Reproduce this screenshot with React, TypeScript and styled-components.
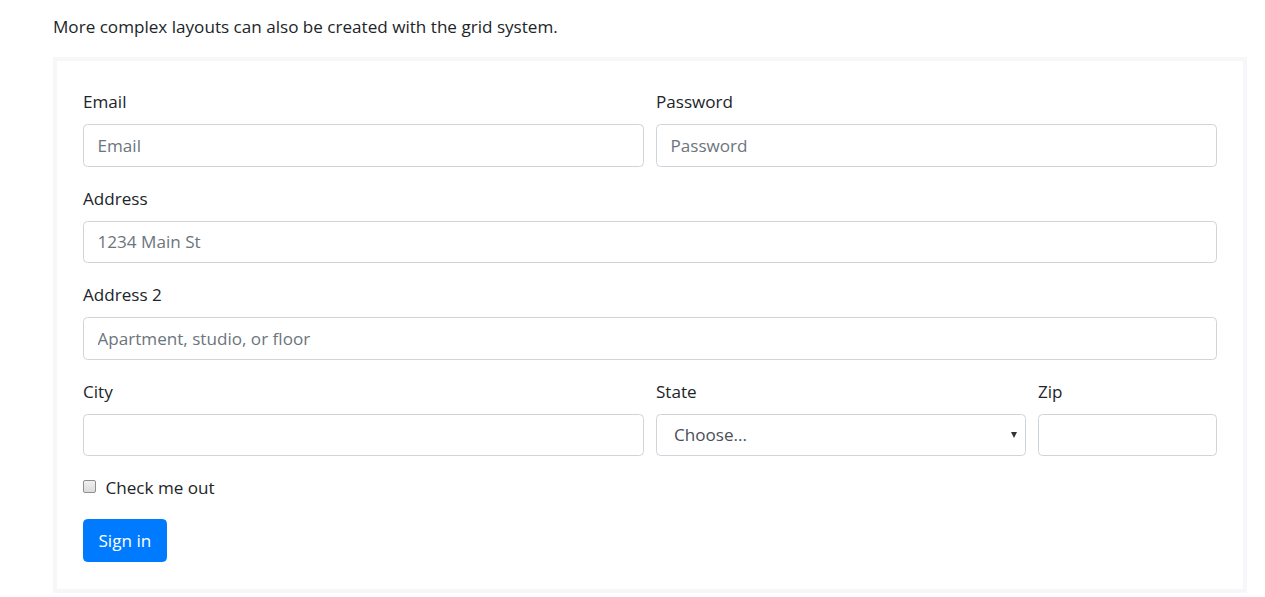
import React from "react";
import styled, { createGlobalStyle } from "styled-components";

const GlobalStyle = createGlobalStyle`
  html, body {
    margin: 0;
    padding: 0;
    background: #ffffff;
  }
  body {
    font-family: "Open Sans", "Noto Sans", sans-serif;
    font-size: 17.1px;
    line-height: 27px;
    color: #212529;
  }
  * { box-sizing: border-box; }
`;

const Page = styled.div`
  width: 1265px;
  padding: 13px 0 0 53px;
`;

const Lead = styled.p`
  margin: 0 0 17px;
  font-size: 17.1px;
  line-height: 27px;
`;

const Example = styled.div`
  width: 1194px;
  border: 4px solid #f7f7f9;
  padding: 27px 26px;
  background: #ffffff;
`;

const Grid = styled.div`
  display: grid;
  grid-template-columns: repeat(12, 1fr);
  column-gap: 12px;
`;

const Group = styled.div<{ $span: number }>`
  grid-column: span ${(p) => p.$span};
  margin-bottom: 18px;
  min-width: 0;
`;

const Label = styled.label`
  display: block;
  margin-bottom: 9px;
  line-height: 27px;
  font-size: 17.1px;
  color: #212529;
`;

const Input = styled.input`
  display: block;
  width: 100%;
  height: 42.5px;
  padding: 6.75px 13.5px;
  font-family: inherit;
  font-size: 17.1px;
  line-height: 27px;
  color: #495057;
  background: #ffffff;
  border: 1px solid #ced4da;
  border-radius: 4.5px;
  outline: none;
  &::placeholder {
    color: #6c757d;
    opacity: 1;
  }
`;

const SelectWrap = styled.div`
  position: relative;
  &::after {
    content: "";
    position: absolute;
    right: 9px;
    top: 18px;
    width: 0;
    height: 0;
    border-left: 3.5px solid transparent;
    border-right: 3.5px solid transparent;
    border-top: 6px solid #333333;
    pointer-events: none;
  }
`;

const Select = styled.select`
  display: block;
  width: 100%;
  height: 42.5px;
  padding: 0 24px 0 17px;
  font-family: inherit;
  font-size: 17.1px;
  color: #495057;
  background: #ffffff;
  border: 1px solid #ced4da;
  border-radius: 4.5px;
  appearance: none;
  -webkit-appearance: none;
  outline: none;
`;

const Check = styled.div`
  grid-column: span 12;
  position: relative;
  padding-left: 22.5px;
  margin-bottom: 18px;
  line-height: 27px;
  display: flex;
`;

const CheckBox = styled.input`
  appearance: none;
  -webkit-appearance: none;
  position: absolute;
  left: 0;
  top: 5.5px;
  width: 13px;
  height: 13px;
  margin: 0;
  border: 1px solid #8f8f8f;
  border-radius: 2px;
  background: linear-gradient(#f0f0f0, #dcdcdc);
`;

const CheckLabel = styled.label`
  font-size: 17.1px;
  line-height: 27px;
`;

const Button = styled.button`
  display: inline-block;
  height: 42.5px;
  padding: 6.75px 14.5px;
  font-family: inherit;
  font-size: 17.1px;
  line-height: 27px;
  color: #ffffff;
  background: #007bff;
  border: 1px solid #007bff;
  border-radius: 4.5px;
  cursor: pointer;
`;

export default function App() {
  return (
    <>
      <GlobalStyle />
      <Page>
        <Lead>More complex layouts can also be created with the grid system.</Lead>
        <Example>
          <form onSubmit={(e) => e.preventDefault()}>
            <Grid>
              <Group $span={6}>
                <Label htmlFor="inputEmail4">Email</Label>
                <Input type="email" id="inputEmail4" placeholder="Email" />
              </Group>
              <Group $span={6}>
                <Label htmlFor="inputPassword4">Password</Label>
                <Input type="password" id="inputPassword4" placeholder="Password" />
              </Group>
              <Group $span={12}>
                <Label htmlFor="inputAddress">Address</Label>
                <Input type="text" id="inputAddress" placeholder="1234 Main St" />
              </Group>
              <Group $span={12}>
                <Label htmlFor="inputAddress2">Address 2</Label>
                <Input type="text" id="inputAddress2" placeholder="Apartment, studio, or floor" />
              </Group>
              <Group $span={6}>
                <Label htmlFor="inputCity">City</Label>
                <Input type="text" id="inputCity" />
              </Group>
              <Group $span={4}>
                <Label htmlFor="inputState">State</Label>
                <SelectWrap>
                  <Select id="inputState" defaultValue="choose">
                    <option value="choose">Choose...</option>
                    <option>...</option>
                  </Select>
                </SelectWrap>
              </Group>
              <Group $span={2}>
                <Label htmlFor="inputZip">Zip</Label>
                <Input type="text" id="inputZip" />
              </Group>
              <Check>
                <CheckBox type="checkbox" id="gridCheck" />
                <CheckLabel htmlFor="gridCheck">Check me out</CheckLabel>
              </Check>
            </Grid>
            <Button type="submit">Sign in</Button>
          </form>
        </Example>
      </Page>
    </>
  );
}
